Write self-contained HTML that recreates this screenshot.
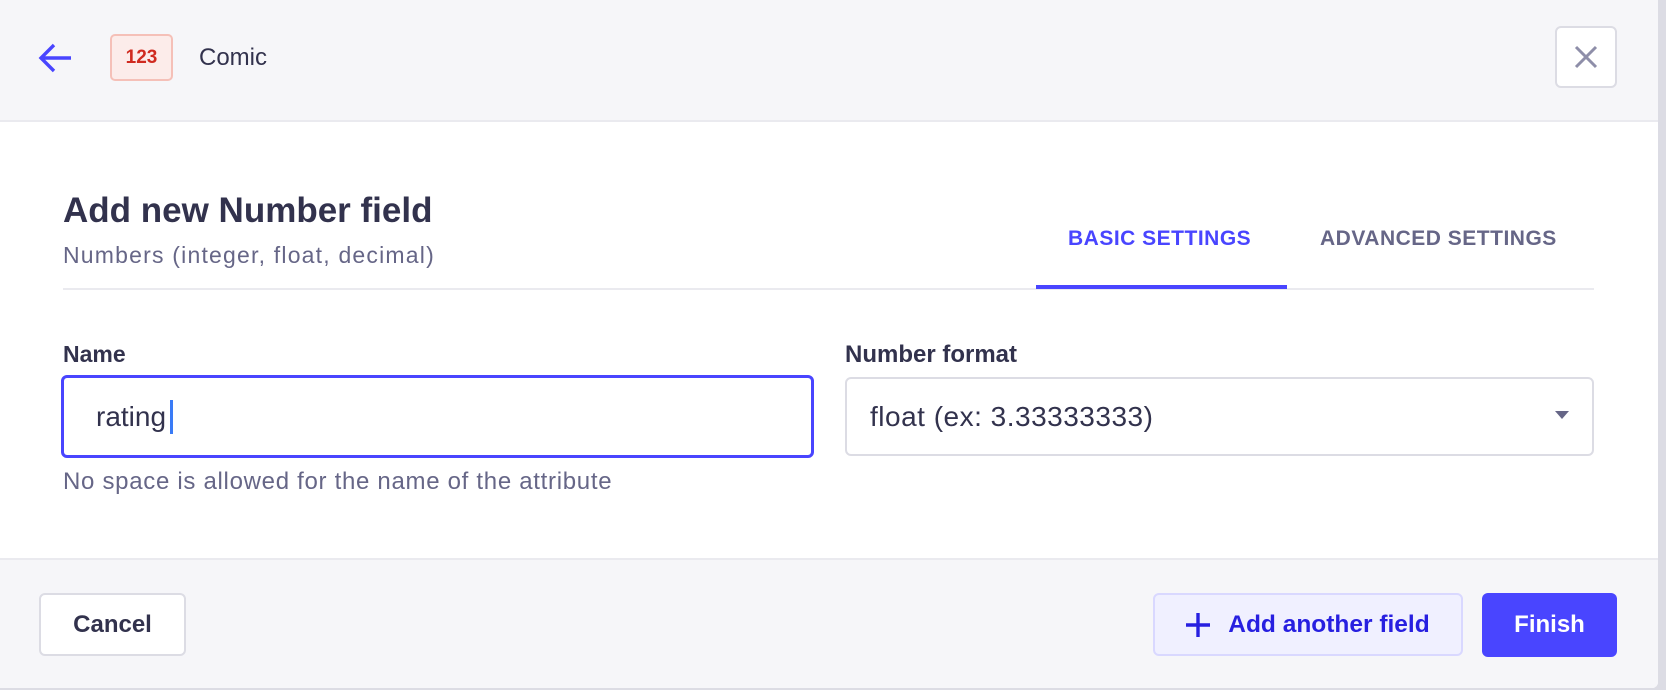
<!DOCTYPE html>
<html><head><meta charset="utf-8"><style>
*{box-sizing:border-box;margin:0;padding:0}
body{width:1666px;height:690px;background:#dcdce4;font-family:"Liberation Sans",sans-serif;position:relative;overflow:hidden}
.modal{position:absolute;left:0;top:0;width:1658px;height:688px;background:#fff;border-radius:0 0 6px 0;overflow:hidden}
.hdr{position:absolute;left:0;top:0;width:100%;height:122px;background:#f6f6f9;border-bottom:2px solid #eaeaef}
.ftr{position:absolute;left:0;top:558px;width:100%;height:130px;background:#f6f6f9;border-top:2px solid #eaeaef}
.a{position:absolute;white-space:nowrap}
.btn{position:absolute;border-radius:6px;font-weight:bold;font-size:24px;display:flex;align-items:center;justify-content:center}
</style></head><body>
<div class="modal">
<div class="hdr">
<svg class="a" style="left:37px;top:42px" width="36" height="32" viewBox="0 0 36 32"><path d="M34 16H4M17 3L4 16l13 13" stroke="#4945ff" stroke-width="3.4" fill="none"/></svg>
<div class="a" style="left:110px;top:34px;width:63px;height:47px;background:#fcecea;border:2px solid #f5c0b8;border-radius:5px;color:#d02b20;font-weight:bold;font-size:19px;display:flex;align-items:center;justify-content:center">123</div>
<div class="a" style="left:199px;top:44px;font-size:24px;color:#32324d">Comic</div>
<div class="a" style="left:1555px;top:26px;width:62px;height:62px;background:#fff;border:2px solid #dcdce4;border-radius:6px"></div>
<svg class="a" style="left:1574px;top:45px" width="24" height="24" viewBox="0 0 24 24"><path d="M2 2L22 22M22 2L2 22" stroke="#8e8ea9" stroke-width="3" fill="none"/></svg>
</div>
<div class="a" style="left:63px;top:191px;font-size:35px;font-weight:bold;color:#32324d">Add new Number field</div>
<div class="a" style="left:63px;top:242px;font-size:23px;letter-spacing:1.2px;color:#666687">Numbers (integer, float, decimal)</div>
<div class="a" style="left:1068px;top:227px;font-size:21px;font-weight:bold;color:#4945ff;letter-spacing:0.5px">BASIC SETTINGS</div>
<div class="a" style="left:1320px;top:227px;font-size:21px;font-weight:bold;color:#666687;letter-spacing:0.5px">ADVANCED SETTINGS</div>
<div class="a" style="left:63px;top:288px;width:1531px;height:2px;background:#eaeaef"></div>
<div class="a" style="left:1036px;top:285px;width:251px;height:4px;background:#4945ff"></div>
<div class="a" style="left:63px;top:341px;font-size:23px;font-weight:bold;color:#32324d">Name</div>
<div class="a" style="left:845px;top:341px;font-size:24px;font-weight:bold;color:#32324d">Number format</div>
<div class="a" style="left:61px;top:375px;width:753px;height:83px;border:3px solid #4945ff;border-radius:6px;background:#fff"></div>
<div class="a" style="left:96px;top:401px;font-size:28px;color:#32324d">rating</div>
<div class="a" style="left:170px;top:400px;width:3px;height:34px;background:#3a7bf6"></div>
<div class="a" style="left:845px;top:377px;width:749px;height:79px;border:2px solid #dcdce4;border-radius:6px;background:#fff"></div>
<div class="a" style="left:870px;top:401px;font-size:28px;letter-spacing:0.5px;color:#32324d">float (ex: 3.33333333)</div>
<svg class="a" style="left:1555px;top:411px" width="14" height="8"><path d="M0 0h14L7 8z" fill="#666687"/></svg>
<div class="a" style="left:63px;top:468px;font-size:24px;letter-spacing:0.7px;color:#666687">No space is allowed for the name of the attribute</div>
<div class="ftr"></div>
<div class="btn" style="left:39px;top:593px;width:147px;height:63px;background:#fff;border:2px solid #dcdce4;color:#32324d">Cancel</div>
<div class="btn" style="left:1153px;top:593px;width:310px;height:63px;background:#f0f0ff;border:2px solid #d9d8ff;color:#271fe0;font-size:24.5px"><svg width="24" height="24" viewBox="0 0 24 24" style="margin-right:18px"><path d="M12 0v24M0 12h24" stroke="#271fe0" stroke-width="3.4"/></svg>Add another field</div>
<div class="btn" style="left:1482px;top:593px;width:135px;height:64px;background:#4945ff;color:#fff">Finish</div>
</div>
</body></html>
